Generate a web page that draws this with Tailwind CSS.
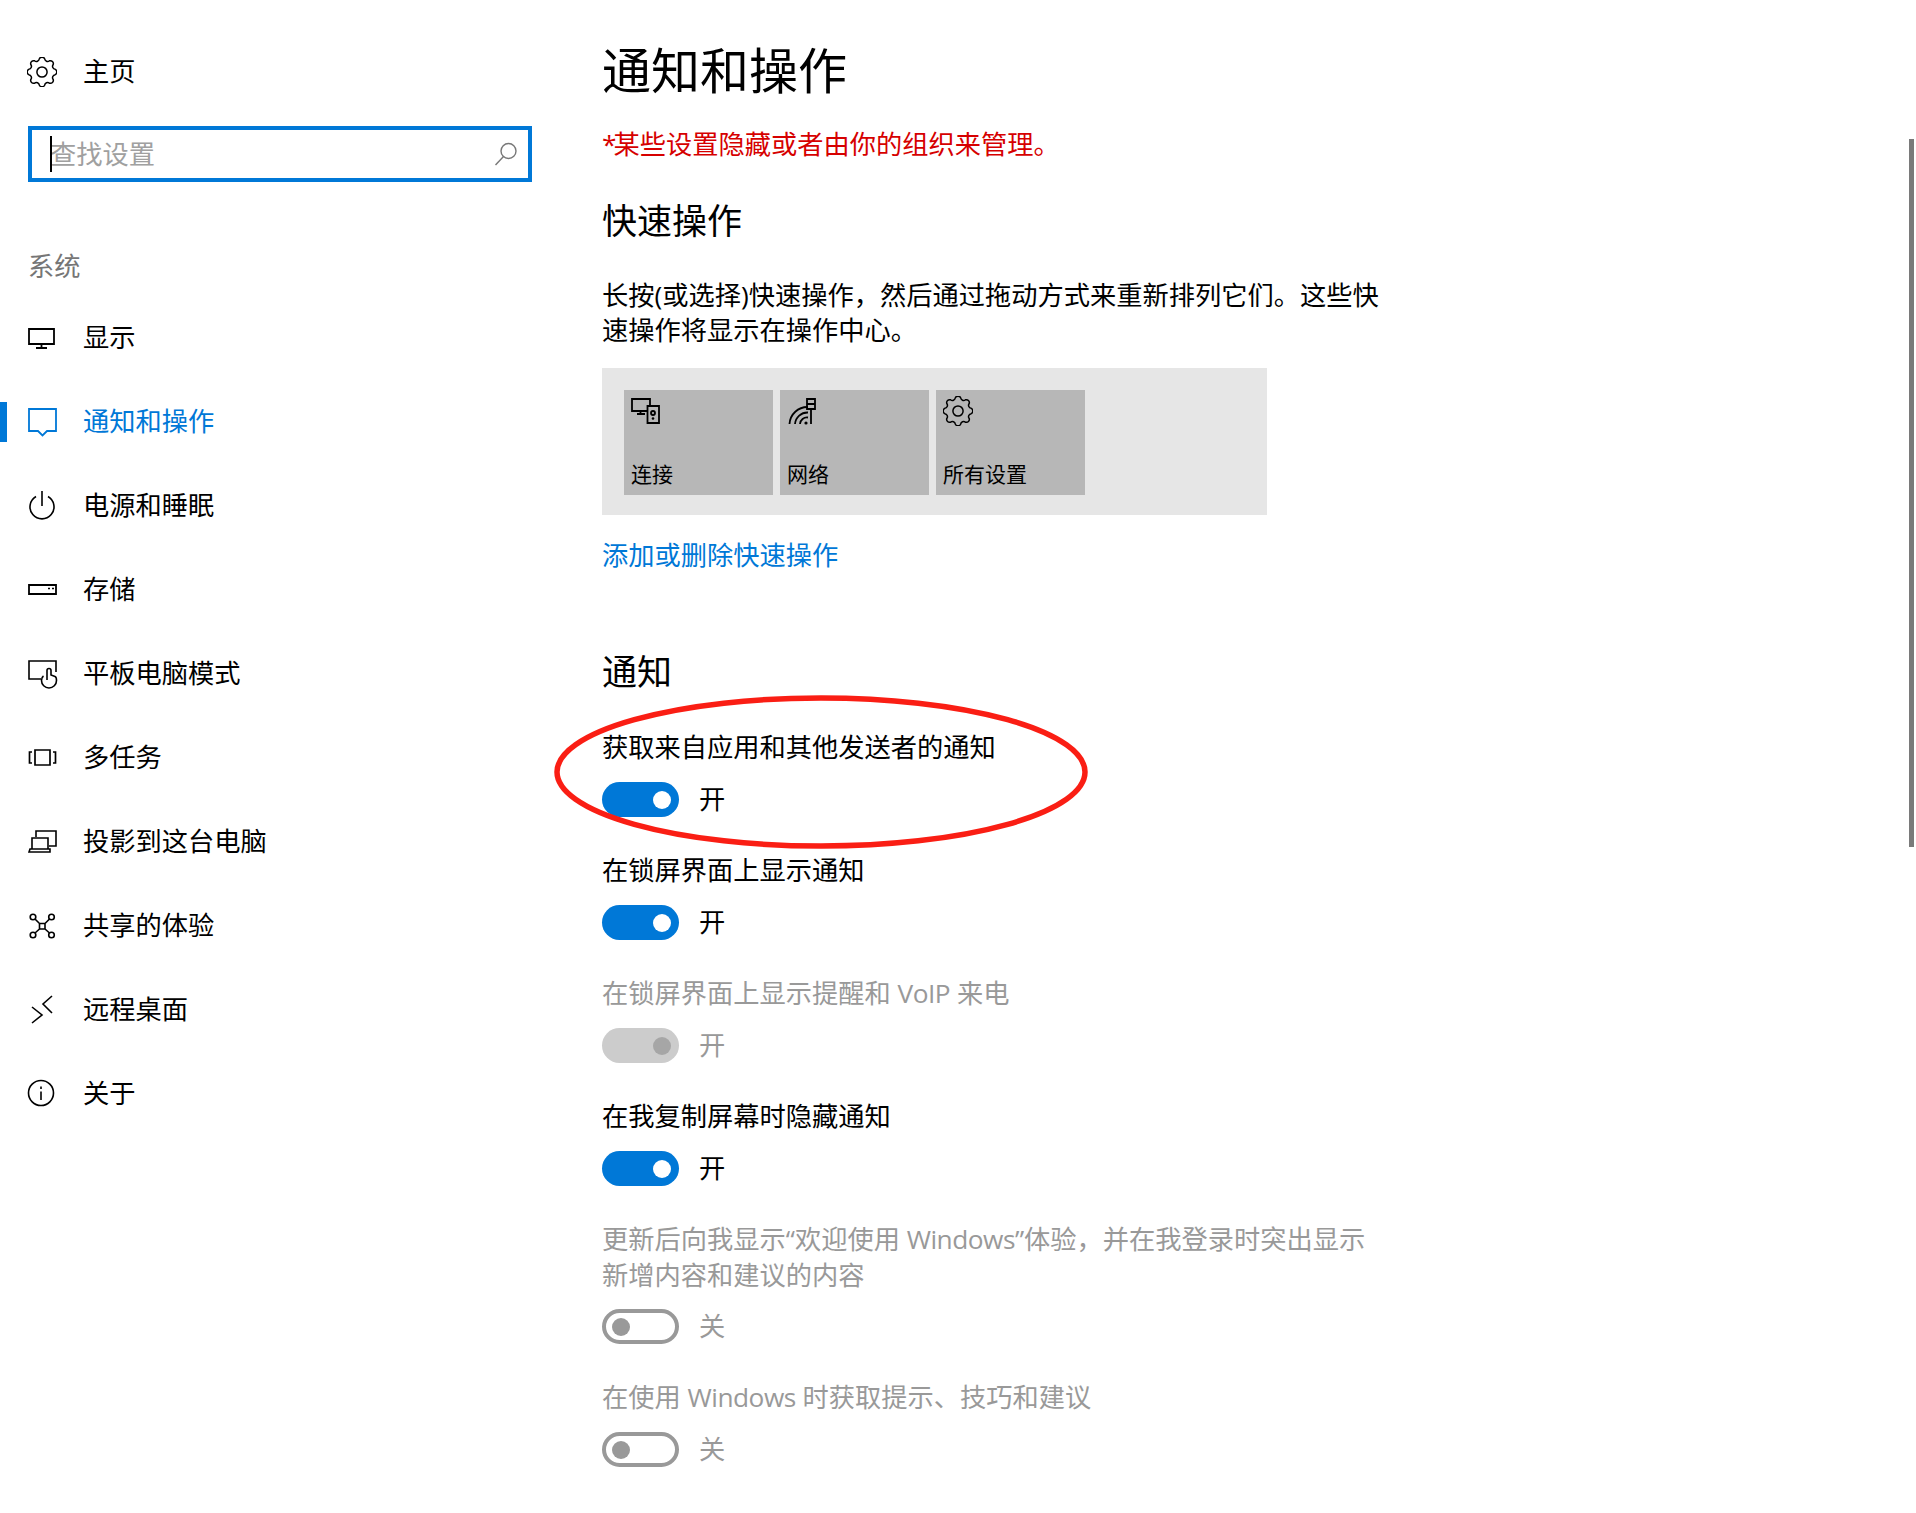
<!DOCTYPE html>
<html lang="zh-CN">
<head>
    <meta charset="UTF-8">
    <title>通知和操作</title>
    <script src="https://cdn.jsdelivr.net/npm/@tailwindcss/browser@4"></script>
</head>
<body class="bg-white text-black font-['Open_Sans','Noto_Sans_CJK_SC',sans-serif]">
<div class="relative flex w-[1916px] h-[1513px] overflow-hidden">

    <!-- Sidebar -->
    <aside class="w-[602px] shrink-0 pt-[30px]">
        <div class="flex items-center h-[84px] pl-[27px] text-[26.25px]">
            <svg class="w-[30px] h-[30px] shrink-0" viewBox="2 2 20 20" fill="none" stroke="#000" stroke-width="1"><path d="M10.24 3.17A2 2 0 0 1 13.76 3.17A2 2 0 0 0 17 4.52A2 2 0 0 1 19.48 7A2 2 0 0 0 20.83 10.24A2 2 0 0 1 20.83 13.76A2 2 0 0 0 19.48 17A2 2 0 0 1 17 19.48A2 2 0 0 0 13.76 20.83A2 2 0 0 1 10.24 20.83A2 2 0 0 0 7 19.48A2 2 0 0 1 4.52 17A2 2 0 0 0 3.17 13.76A2 2 0 0 1 3.17 10.24A2 2 0 0 0 4.52 7A2 2 0 0 1 7 4.52A2 2 0 0 0 10.24 3.17Z"/><circle cx="12" cy="12" r="3.4"/></svg>
            <span class="ml-[26px]">主页</span>
        </div>
        <div class="relative ml-[28px] mt-[12px] w-[504px] h-[56px] border-4 border-[#0078d7] flex items-center justify-between pl-[18px] pr-[10px]">
            <span class="pt-[2px] text-[26.25px] text-[#a0a0a0]">查找设置</span>
            <span class="absolute left-[18px] top-[6px] w-[2px] h-[36px] bg-black"></span>
            <svg class="w-[24px] h-[24px]" viewBox="0 0 24 24" fill="none" stroke="#777" stroke-width="1.4"><circle cx="14.5" cy="9" r="7.5"/><path d="M9.5 14.5L1.5 23"/></svg>
        </div>
        <div class="ml-[28px] mt-[66px] h-[36px] leading-[36px] text-[26.25px] text-[#767676]">系统</div>

        <nav class="mt-[12px]">
            <div class="flex items-center h-[84px] pl-[28px] text-[26.25px]">
                <svg class="w-[30px] h-[30px] shrink-0" viewBox="0 0 30 30" fill="none" stroke="#000" stroke-width="1.8"><path d="M1 6h25v15H1zM13.5 21v4M8 25h11"/></svg>
                <span class="ml-[25px]">显示</span>
            </div>
            <div class="relative flex items-center h-[84px] pl-[28px] text-[26.25px] text-[#0078d7]">
                <span class="absolute left-0 top-[22px] w-[7px] h-[40px] bg-[#0078d7]"></span>
                <svg class="w-[30px] h-[30px] shrink-0" viewBox="0 0 30 30" fill="none" stroke="#0078d7" stroke-width="1.8"><path d="M1 2h27v22H19l-4.500 4.500L10 24H1z"/></svg>
                <span class="ml-[25px]">通知和操作</span>
            </div>
            <div class="flex items-center h-[84px] pl-[27px] text-[26.25px]">
                <svg class="w-[30px] h-[30px] shrink-0" viewBox="0 0 30 30" fill="none" stroke="#000" stroke-width="1.6"><path d="M9 5.500A12 12 0 1 0 21 5.500M15 0v15"/></svg>
                <span class="ml-[26px]">电源和睡眠</span>
            </div>
            <div class="flex items-center h-[84px] pl-[28px] text-[26.25px]">
                <svg class="w-[30px] h-[30px] shrink-0" viewBox="0 0 30 30" fill="none" stroke="#000" stroke-width="1.8"><path d="M1 10h27v9H1z"/><path d="M20 13.500h2M24 13.500h2" stroke-width="1.500"/></svg>
                <span class="ml-[25px]">存储</span>
            </div>
            <div class="flex items-center h-[84px] pl-[28px] text-[26.25px]">
                <svg class="w-[30px] h-[30px] shrink-0" viewBox="0 0 30 30" fill="none" stroke="#000" stroke-width="1.6"><path d="M13 20H1V2h27v11"/><path d="M19 21V11.500a2 2 0 0 1 4 0V16l4 1.500c1.500.6 1.500 2.500 1.500 4a7.500 7.500 0 0 1-15 0c0-2 .5-3.500 2-4.500"/></svg>
                <span class="ml-[25px]">平板电脑模式</span>
            </div>
            <div class="flex items-center h-[84px] pl-[28px] text-[26.25px]">
                <svg class="w-[30px] h-[30px] shrink-0" viewBox="0 0 30 30" fill="none" stroke="#000" stroke-width="1.700"><path d="M7 7h15v15H7zM4 9H1.500v11H4M25 9h2.500v11H25"/></svg>
                <span class="ml-[25px]">多任务</span>
            </div>
            <div class="flex items-center h-[84px] pl-[28px] text-[26.25px]">
                <svg class="w-[30px] h-[30px] shrink-0" viewBox="0 0 30 30" fill="none" stroke="#000" stroke-width="1.600"><path d="M8 10V4h20v15h-7"/><path d="M4 11h16v11H4zM1 25h21v-3H2z"/></svg>
                <span class="ml-[25px]">投影到这台电脑</span>
            </div>
            <div class="flex items-center h-[84px] pl-[28px] text-[26.25px]">
                <svg class="w-[30px] h-[30px] shrink-0" viewBox="0 0 30 30" fill="none" stroke="#000" stroke-width="1.600"><circle cx="5" cy="6" r="2.800"/><circle cx="23.500" cy="6" r="2.800"/><circle cx="5" cy="24" r="2.800"/><circle cx="23.500" cy="24" r="2.800"/><path d="M11.500 12.500h5.500v5.500h-5.500zM7 8l4.500 4.500M21.500 8L17 12.500M7 22l4.500-4M21.500 22L17 18"/></svg>
                <span class="ml-[25px]">共享的体验</span>
            </div>
            <div class="flex items-center h-[84px] pl-[28px] text-[26.25px]">
                <svg class="w-[30px] h-[30px] shrink-0" viewBox="0 0 30 30" fill="none" stroke="#000" stroke-width="1.600"><path d="M4 12l10 8-10 8M24 1l-9 8 9 9"/></svg>
                <span class="ml-[25px]">远程桌面</span>
            </div>
            <div class="flex items-center h-[84px] pl-[27px] text-[26.25px]">
                <svg class="w-[30px] h-[30px] shrink-0" viewBox="0 0 30 30" fill="none" stroke="#000" stroke-width="1.600"><circle cx="14" cy="14" r="12.500"/><path d="M14 12.500V21M14 7.500v2.400"/></svg>
                <span class="ml-[26px]">关于</span>
            </div>
        </nav>
    </aside>

    <!-- Content -->
    <main class="w-[800px] pt-[40px]">
        <h1 class="h-[60px] leading-[60px] text-[49px]">通知和操作</h1>
        <p class="mt-[26px] h-[36px] leading-[36px] text-[26.25px] text-[#d60000]"><span class="tracking-[-3px]">*</span>某些设置隐藏或者由你的组织来管理。</p>
        <h2 class="mt-[36px] h-[46px] leading-[46px] text-[35px]">快速操作</h2>
        <p class="mt-[34px] w-[780px] leading-[35px] text-[26.25px]">长按(或选择)快速操作，然后通过拖动方式来重新排列它们。这些快速操作将显示在操作中心。</p>

        <div class="mt-[20px] w-[665px] h-[147px] bg-[#e6e6e6] flex gap-[7px] pl-[22px] pt-[22px]">
            <div class="w-[149px] h-[105px] bg-[#b7b7b7] flex flex-col justify-between px-[7px] pt-[6px] pb-[7px]">
                <svg class="w-[30px] h-[30px]" viewBox="0 0 30 30" fill="none" stroke="#000" stroke-width="1.800"><path d="M16 15H1V3h18v6M6 18h8M9.500 15v3"/><path d="M16.500 10h11.500v17H16.500z"/><circle cx="22" cy="17" r="2"/><circle cx="22" cy="22.500" r="1.300" fill="#000" stroke="none"/></svg>
                <span class="text-[21px] leading-[28px]">连接</span>
            </div>
            <div class="w-[149px] h-[105px] bg-[#b7b7b7] flex flex-col justify-between px-[7px] pt-[6px] pb-[7px]">
                <svg class="w-[30px] h-[30px]" viewBox="0 0 30 30" fill="none" stroke="#000" stroke-width="1.800"><path d="M2.500 28A18 18 0 0 1 21 11M8 28A12.500 12.500 0 0 1 21 16.500M13 28A7 7 0 0 1 21 21.500"/><circle cx="19" cy="27" r="1.600" fill="#000" stroke="none"/><path d="M24 28V13M20 3h8v10h-8zM20 8h8"/></svg>
                <span class="text-[21px] leading-[28px]">网络</span>
            </div>
            <div class="w-[149px] h-[105px] bg-[#b7b7b7] flex flex-col justify-between px-[7px] pt-[6px] pb-[7px]">
                <svg class="w-[30px] h-[30px]" viewBox="2 2 20 20" fill="none" stroke="#000" stroke-width="1"><path d="M10.24 3.17A2 2 0 0 1 13.76 3.17A2 2 0 0 0 17 4.52A2 2 0 0 1 19.48 7A2 2 0 0 0 20.83 10.24A2 2 0 0 1 20.83 13.76A2 2 0 0 0 19.48 17A2 2 0 0 1 17 19.48A2 2 0 0 0 13.76 20.83A2 2 0 0 1 10.24 20.83A2 2 0 0 0 7 19.48A2 2 0 0 1 4.52 17A2 2 0 0 0 3.17 13.76A2 2 0 0 1 3.17 10.24A2 2 0 0 0 4.52 7A2 2 0 0 1 7 4.52A2 2 0 0 0 10.24 3.17Z"/><circle cx="12" cy="12" r="3.4"/></svg>
                <span class="text-[21px] leading-[28px]">所有设置</span>
            </div>
        </div>

        <a class="block mt-[22px] h-[36px] leading-[36px] text-[26.25px] text-[#0078d7]">添加或删除快速操作</a>

        <h2 class="mt-[76px] h-[46px] leading-[46px] text-[35px]">通知</h2>

        <p class="mt-[34px] h-[36px] leading-[36px] text-[26.25px]">获取来自应用和其他发送者的通知</p>
        <div class="mt-[17px] flex items-center h-[35px]">
            <span class="w-[77px] h-[35px] rounded-full bg-[#0078d7] flex items-center justify-end pr-[8px]"><span class="w-[18px] h-[18px] rounded-full bg-white"></span></span>
            <span class="ml-[20px] text-[26.25px]">开</span>
        </div>

        <p class="mt-[35px] h-[36px] leading-[36px] text-[26.25px]">在锁屏界面上显示通知</p>
        <div class="mt-[17px] flex items-center h-[35px]">
            <span class="w-[77px] h-[35px] rounded-full bg-[#0078d7] flex items-center justify-end pr-[8px]"><span class="w-[18px] h-[18px] rounded-full bg-white"></span></span>
            <span class="ml-[20px] text-[26.25px]">开</span>
        </div>

        <p class="mt-[35px] h-[36px] leading-[36px] text-[26.25px] text-[#999]">在锁屏界面上显示提醒和 <span class="tracking-[-0.5px]">VoIP</span> 来电</p>
        <div class="mt-[17px] flex items-center h-[35px]">
            <span class="w-[77px] h-[35px] rounded-full bg-[#ccc] flex items-center justify-end pr-[8px]"><span class="w-[18px] h-[18px] rounded-full bg-[#a6a6a6]"></span></span>
            <span class="ml-[20px] text-[26.25px] text-[#999]">开</span>
        </div>

        <p class="mt-[35px] h-[36px] leading-[36px] text-[26.25px]">在我复制屏幕时隐藏通知</p>
        <div class="mt-[17px] flex items-center h-[35px]">
            <span class="w-[77px] h-[35px] rounded-full bg-[#0078d7] flex items-center justify-end pr-[8px]"><span class="w-[18px] h-[18px] rounded-full bg-white"></span></span>
            <span class="ml-[20px] text-[26.25px]">开</span>
        </div>

        <p class="mt-[35px] w-[780px] leading-[36px] text-[26.25px] text-[#999]">更新后向我显示“欢迎使用 <span class="tracking-[-0.5px]">Windows</span>”体验，并在我登录时突出显示新增内容和建议的内容</p>
        <div class="mt-[16px] flex items-center h-[35px]">
            <span class="w-[77px] h-[35px] rounded-full border-4 border-[#999] flex items-center pl-[6px]"><span class="w-[18px] h-[18px] rounded-full bg-[#999]"></span></span>
            <span class="ml-[20px] text-[26.25px] text-[#999]">关</span>
        </div>

        <p class="mt-[35px] h-[36px] leading-[36px] text-[26.25px] text-[#999]">在使用 <span class="tracking-[-0.5px]">Windows</span> 时获取提示、技巧和建议</p>
        <div class="mt-[17px] flex items-center h-[35px]">
            <span class="w-[77px] h-[35px] rounded-full border-4 border-[#999] flex items-center pl-[6px]"><span class="w-[18px] h-[18px] rounded-full bg-[#999]"></span></span>
            <span class="ml-[20px] text-[26.25px] text-[#999]">关</span>
        </div>
    </main>

    <!-- Red annotation over the first toggle -->
    <svg class="absolute left-[551px] top-[693px] w-[540px] h-[158px]" viewBox="0 0 540 158" fill="none"><ellipse cx="270" cy="79" rx="264" ry="74" stroke="#fa1e14" stroke-width="5.500"/></svg>

    <!-- Scrollbar -->
    <div class="absolute left-[1909px] top-[139px] w-[5px] h-[708px] bg-[#7a7a7a]"></div>
</div>
</body>
</html>
